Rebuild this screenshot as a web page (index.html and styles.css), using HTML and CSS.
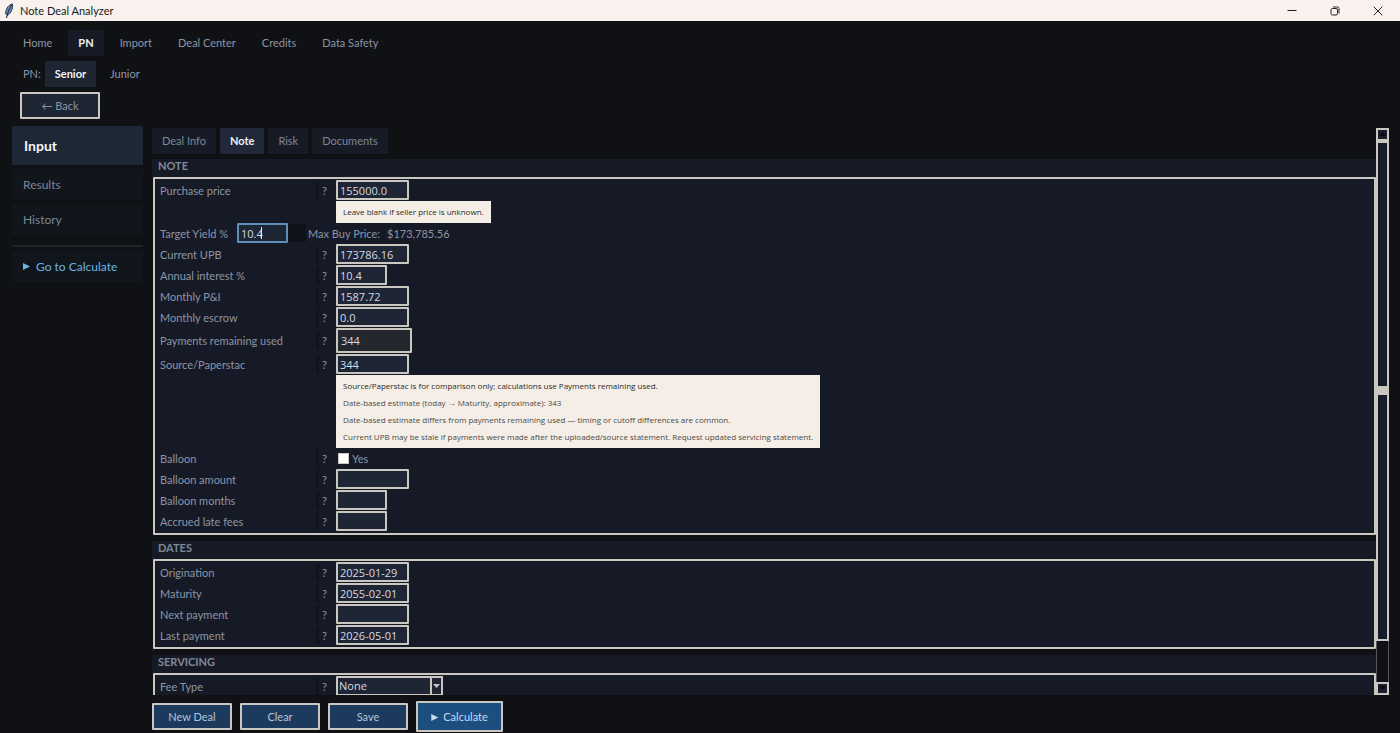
FILE: index.html
```html
<!DOCTYPE html>
<html lang="en">
<head>
  <meta charset="UTF-8" />
  <meta name="viewport" content="width=device-width, initial-scale=1.0" />
  <title>Note Deal Analyzer</title>
  <link rel="stylesheet" href="styles.css">
</head>
<body>

<header class="titlebar">
  <svg class="feather" viewBox="0 0 10 16" width="10" height="16">
    <path d="M8.500 1C5 1.500 2 5 1.500 10.500L3.500 12.500C7 10 9 6 8.500 1Z" fill="#6a8fc0" stroke="#26364f" stroke-width="1"/>
    <path d="M8 2C5 6 3.500 10 2.500 15" fill="none" stroke="#15202f" stroke-width="1"/>
  </svg>
  <span class="app-title">Note Deal Analyzer</span>
  <div class="window-controls">
    <button aria-label="Minimize"><svg viewBox="0 0 10 10" width="10" height="10"><path d="M.5 4.500H9.500"/></svg></button>
    <button aria-label="Restore"><svg viewBox="0 0 10 10" width="10" height="10"><rect x="1" y="2.500" width="6.500" height="6.500" rx="1.500"/><path d="M3 1H7.500Q9 1 9 2.500V7.500"/></svg></button>
    <button aria-label="Close"><svg viewBox="0 0 10 10" width="10" height="10"><path d="M.7 .7L9.300 9.300M9.300 .7L.7 9.300"/></svg></button>
  </div>
</header>

<nav class="nav">
  <button class="tab">Home</button>
  <button class="tab active">PN</button>
  <button class="tab">Import</button>
  <button class="tab">Deal Center</button>
  <button class="tab">Credits</button>
  <button class="tab">Data Safety</button>
</nav>
<nav class="subnav">
  <span>PN:</span>
  <button class="tab active">Senior</button>
  <button class="tab">Junior</button>
</nav>
<div class="back-row"><button class="btn back">← Back</button></div>

<div class="main">
  <aside class="sidebar">
    <button class="side active">Input</button>
    <button class="side">Results</button>
    <button class="side">History</button>
    <hr>
    <button class="side go"><i class="play"></i>Go to Calculate</button>
  </aside>

  <main class="content">
    <div class="panel">
      <div class="form-tabs">
        <button class="tab">Deal Info</button>
        <button class="tab active">Note</button>
        <button class="tab">Risk</button>
        <button class="tab">Documents</button>
      </div>

      <h2>NOTE</h2>
      <section class="box">
        <div class="row"><label for="price">Purchase price</label><span class="help">?</span><input type="text" id="price" value="155000.0"></div>
        <div class="notice short"><p>Leave blank if seller price is unknown.</p></div>
        <div class="yield-row">
          <label for="yield">Target Yield %</label>
          <span class="yield-field"><input type="text" id="yield" value="10.4"><i class="caret"></i></span>
          <span class="spacer"></span>
          <span class="max-label">Max Buy Price:</span>
          <span class="max-value">$173,785.56</span>
        </div>
        <div class="row"><label for="upb">Current UPB</label><span class="help">?</span><input type="text" id="upb" value="173786.16"></div>
        <div class="row"><label for="rate">Annual interest %</label><span class="help">?</span><input type="text" id="rate" class="small" value="10.4"></div>
        <div class="row"><label for="pi">Monthly P&amp;I</label><span class="help">?</span><input type="text" id="pi" value="1587.72"></div>
        <div class="row"><label for="escrow">Monthly escrow</label><span class="help">?</span><input type="text" id="escrow" value="0.0"></div>
        <div class="row tall"><label for="remaining">Payments remaining used</label><span class="help">?</span><input type="text" id="remaining" class="readonly" value="344" readonly></div>
        <div class="row"><label for="source">Source/Paperstac</label><span class="help">?</span><input type="text" id="source" value="344"></div>
        <div class="notice">
          <p class="strong">Source/Paperstac is for comparison only; calculations use Payments remaining used.</p>
          <p>Date-based estimate (today → Maturity, approximate): 343</p>
          <p>Date-based estimate differs from payments remaining used — timing or cutoff differences are common.</p>
          <p>Current UPB may be stale if payments were made after the uploaded/source statement. Request updated servicing statement.</p>
        </div>
        <div class="row"><span>Balloon</span><span class="help">?</span><label class="check"><input type="checkbox">Yes</label></div>
        <div class="row"><label for="bamount">Balloon amount</label><span class="help">?</span><input type="text" id="bamount"></div>
        <div class="row"><label for="bmonths">Balloon months</label><span class="help">?</span><input type="text" id="bmonths" class="small"></div>
        <div class="row"><label for="late">Accrued late fees</label><span class="help">?</span><input type="text" id="late" class="small"></div>
      </section>

      <h2>DATES</h2>
      <section class="box">
        <div class="row"><label for="orig">Origination</label><span class="help">?</span><input type="text" id="orig" value="2025-01-29"></div>
        <div class="row"><label for="maturity">Maturity</label><span class="help">?</span><input type="text" id="maturity" value="2055-02-01"></div>
        <div class="row"><label for="next">Next payment</label><span class="help">?</span><input type="text" id="next"></div>
        <div class="row"><label for="last">Last payment</label><span class="help">?</span><input type="text" id="last" value="2026-05-01"></div>
      </section>

      <h2>SERVICING</h2>
      <section class="box">
        <div class="row"><label for="fee">Fee Type</label><span class="help">?</span><span class="combo"><select id="fee"><option>None</option></select><i class="arrow"></i></span></div>
      </section>
    </div>

    <div class="scrollbar">
      <div class="scroll-btn up"></div>
      <div class="thumb"><div class="grip"></div></div>
      <div class="track"></div>
      <div class="scroll-btn down"></div>
    </div>
  </main>
</div>

<footer class="actions">
  <button class="btn">New Deal</button>
  <button class="btn">Clear</button>
  <button class="btn">Save</button>
  <button class="btn primary"><i class="play"></i>Calculate</button>
</footer>

</body>
</html>
```
FILE: styles.css
```css
* { box-sizing: border-box; }
body {
  font-family: Lato, "Open Sans", sans-serif;
  font-size: 11px;
  line-height: 15px;
  background: #0f1115;
  color: #8d95a5;
  margin: 0;
  height: 100vh;
  display: flex;
  flex-direction: column;
  overflow: hidden;
}
button, input, select { font: inherit; color: inherit; border: none; border-radius: 0; margin: 0; padding: 0; }
button { background: none; cursor: pointer; white-space: nowrap; }
p { margin: 0; }

/* title bar */
.titlebar {
  flex: none;
  height: 21px;
  display: flex;
  align-items: center;
  gap: 6px;
  padding-left: 4px;
  background: #f9f1ed;
  color: #1a1a1a;
}
.window-controls { margin-left: auto; display: flex; padding-right: 1px; }
.window-controls button { width: 43px; height: 21px; display: flex; align-items: center; justify-content: center; }
.window-controls svg { fill: none; stroke: #222; stroke-width: 1; }

/* navigation */
.tab { height: 26px; padding: 0 10px 2px; }
.tab.active { color: #f0f2f6; font-weight: bold; }
.nav { display: flex; gap: 6px; padding: 9px 13px 0; }
.nav .active { background: #171b26; }
.subnav { display: flex; align-items: center; gap: 4px; padding: 5px 23px 0; }
.subnav span { padding-bottom: 2px; }
.subnav .active { background: #1e2533; }
.back-row { padding: 5px 20px 7px; }
.btn {
  width: 80px;
  height: 27px;
  border: 2px solid #c9c7c0;
  border-radius: 1px;
  background: #1c3a5e;
  color: #b4c6dc;
}
.back { background: #1e2533; color: #8d95a5; display: block; }

.main { flex: 1; min-height: 0; display: flex; gap: 9px; padding: 0 11px 0 12px; }

/* sidebar */
.sidebar { width: 131px; flex: none; display: flex; flex-direction: column; gap: 4px; }
.side { height: 31px; padding: 0 11px; text-align: left; background: #11151c; font-size: 12px; color: #7d8696; }
.side.active { height: 39px; padding: 0 12px; background: #1d2736; color: #f4f6fa; font-size: 14px; font-weight: bold; }
.sidebar hr { width: 100%; margin: 6px 0 0; border: none; border-top: 2px solid #1e232d; }
.side.go { color: #6cb4e6; display: flex; align-items: center; gap: 6px; }
.play {
  width: 7px;
  height: 7px;
  display: inline-block;
  background: currentColor;
  clip-path: polygon(0 0, 100% 50%, 0 100%);
}

/* form */
.content { flex: 1; min-width: 0; display: flex; padding-top: 2px; }
.panel { flex: 1; min-width: 0; overflow: hidden; }
.form-tabs { display: flex; gap: 4px; }
.form-tabs .tab { background: #171b26; color: #7d8696; }
.form-tabs .active { background: #20283a; color: #f0f2f6; }
h2 {
  margin: 5px 0 0;
  height: 18px;
  padding: 0 6px;
  background: #161a24;
  font-size: 11px;
  line-height: 14px;
  color: #7f899b;
}
.box + h2 { margin-top: 6px; }
.box { border: 2px solid #c9c7c0; border-radius: 1px; padding: 1px 5px; background: #161a26; margin-left: 1px; }
.row {
  display: grid;
  grid-template-columns: 156px 20px auto;
  align-items: center;
  justify-content: start;
  height: 21px;
  padding-bottom: 1px;
}
.row.tall { height: 26px; }
.help { border-left: 3px solid #11141b; width: 16px; height: 17px; line-height: 17px; padding-right: 2px; text-align: center; }
.row input[type="text"], .yield-field input, .combo select {
  width: 73px;
  height: 20px;
  padding: 0 2px;
  border: 2px solid #c9c7c0;
  border-radius: 1px;
  background: #1e2535;
  color: #d5dae3;
  font-family: "Open Sans", sans-serif;
  line-height: 14px;
  outline: none;
}
.row input.small, .yield-field input { width: 51px; }
.row input.readonly { width: 76px; height: 25px; padding: 0 3px; background: #24272e; }
.yield-field input { border-color: #5f8fb8; }
.notice {
  width: fit-content;
  margin-left: 176px;
  padding: 3px 7px;
  height: 73px;
  background: #f4eee6;
  color: #4c4a47;
  font-family: "Open Sans", sans-serif;
  font-size: 8px;
  line-height: 16px;
  display: flex;
  flex-direction: column;
  justify-content: space-between;
  white-space: nowrap;
}
.notice .strong, .notice.short { color: #2b2a28; }
.notice.short { height: 22px; }
.yield-row { display: flex; align-items: center; height: 21px; padding-bottom: 1px; }
.yield-row label { width: 77px; }
.yield-field { position: relative; display: flex; }
.caret { position: absolute; left: 24px; top: 4px; width: 1px; height: 12px; background: #e6e9ee; }
.spacer { width: 18px; height: 18px; background: #0f1218; }
.max-label { width: 81px; padding-left: 2px; }
.check { display: flex; align-items: center; gap: 3px; padding-left: 2px; }
.check input { appearance: none; width: 11px; height: 11px; background: #fff; border: 1px solid #c9c7c0; }
.combo { position: relative; display: flex; }
.combo select { width: 107px; padding: 0 1px; appearance: none; }
.arrow { position: absolute; right: 0; top: 0; width: 13px; height: 20px; border: 2px solid #c9c7c0; pointer-events: none; }
.arrow::after {
  content: "";
  position: absolute;
  left: 1px;
  top: 6px;
  width: 7px;
  height: 4px;
  background: #c9c7c0;
  clip-path: polygon(0 0, 100% 0, 50% 100%);
}

/* scrollbar */
.scrollbar { width: 13px; flex: none; display: flex; flex-direction: column; }
.scroll-btn { height: 13px; flex: none; border: 2px solid #c9c7c0; background: #1a1f2c; }
.scroll-btn::after {
  content: "";
  display: block;
  margin: 2px auto;
  width: 7px;
  height: 4px;
  background: #07090d;
  clip-path: polygon(50% 0, 100% 100%, 0 100%);
}
.scroll-btn.down::after { clip-path: polygon(0 0, 100% 0, 50% 100%); }
.thumb { flex: 12; display: flex; align-items: center; border: 2px solid #c9c7c0; background: #161b2a; }
.grip { width: 100%; height: 9px; background: #c9c7c0; }
.track { flex: 1; border: solid #55565a; border-width: 0 1px; background: #0f1115; }

/* bottom buttons */
.actions { flex: none; height: 38px; display: flex; align-items: center; gap: 8px; padding: 5px 152px 0; }
.actions .primary { width: 87px; height: 31px; background: #1d4e80; color: #c4dcf2; }
.primary .play { margin-right: 5px; }
```
